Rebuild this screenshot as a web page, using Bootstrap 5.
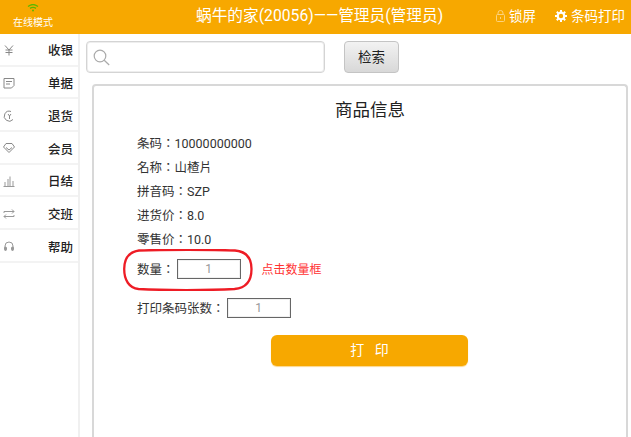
<!DOCTYPE html>
<html lang="zh">
<head>
<meta charset="utf-8">
<title>商品信息</title>
<link href="https://cdn.jsdelivr.net/npm/bootstrap@5.3.0/dist/css/bootstrap.min.css" rel="stylesheet">
<style>
html,body{height:437px;overflow:hidden;background:#fff}
body{font-family:Roboto,"Noto Sans CJK SC",sans-serif;color:#333;font-size:13px}
.top-bar{height:34px;background:#f7a800;color:#fff;position:relative}
.mode-box{width:66px;font-size:10px;line-height:12px;padding-top:4px}
.mode-box svg{display:block;margin:0 auto 5px}
.top-title{font-size:15.7px;line-height:32px;left:196px;position:absolute;top:0;white-space:nowrap}
.top-act{position:absolute;top:0;right:6px;height:32px;font-size:13.5px;gap:19px}
.side-col{width:80px;height:403px;border-right:2px solid #f0f0f0;flex:none}
.side-row{height:32.7px;border-bottom:2px solid #f3f3f3;padding:5px 5px 0 3px;font-size:12.5px;color:#222;font-weight:500}
.side-row svg{margin-top:-3px}
.main-col{padding:7px 3px 0 6px;min-width:0}
.find-box{width:239px;height:32px;border:1px solid #d4d4d4;border-radius:4px;box-shadow:inset 0 0 0 1px #eee;padding-left:6px}
.find-btn{width:55px;height:32px;margin-left:19px;padding:0;border:1px solid #c4c4c4;border-radius:4px;background:linear-gradient(#f2f2f2,#d8d8d8);font-size:13.5px;color:#222;--bs-btn-hover-bg:#ddd}
.goods-card{margin:11px 0 0 6px;height:360px;border:2px solid #d8d8d8;border-bottom:0;border-radius:4px 4px 0 0;position:relative;padding:0 42px 0 43px}
.goods-title{font-size:17.500px;line-height:24px;color:#222;margin:12px 0 9px 198px;font-weight:400}
.info-line{height:24px;line-height:24px;font-size:12.5px;color:#333;font-family:"Noto Sans CJK TC",sans-serif}
.info-line .digits,.num-box{font-family:Roboto,sans-serif}
.qty-line{margin-top:5px;height:26px;font-size:12.5px;font-family:"Noto Sans CJK TC",sans-serif}
.qty-line.second{margin-top:13px}
.num-box{width:64px;height:20px;margin-left:2px;border:1px solid #666;box-shadow:inset 0 0 0 1px #f0f0f0;color:#999;font-size:12px;line-height:18px;text-align:center}
.hint-red{color:#f33;font-size:12px;margin-left:21px;font-family:"Noto Sans CJK SC",sans-serif}
.print-btn{display:block;width:197px;height:31px;margin:14px 0 0 134px;padding:0;border:0;border-radius:6px;background:#f7a800;box-shadow:0 1px 1px #fbd68a;color:#fff;font-size:14px;--bs-btn-hover-bg:#f7a800;--bs-btn-hover-color:#fff}
.red-ring{position:absolute;left:29px;top:163px}
</style>
</head>
<body>
<header class="top-bar d-flex">
  <div class="mode-box text-center">
    <svg width="12" height="8" viewBox="0 0 12 8" fill="none" stroke="#5cb800" stroke-width="1.3"><path d="M1 2.4C4 .2 8 .2 11 2.4M3 4.4C5 3 7 3 9 4.4"/><circle cx="6" cy="6.4" r="1" fill="#5cb800" stroke="none"/></svg>
    在线模式
  </div>
  <div class="top-title">蜗牛的家(20056)——管理员(管理员)</div>
  <div class="top-act d-flex align-items-center">
    <span class="d-flex align-items-center gap-1">
      <svg width="9" height="12" viewBox="0 0 9 12" fill="none" stroke="#fcd27f"><rect x=".5" y="4.5" width="8" height="7" rx="1"/><path d="M2 4.5V3a2.5 2.5 0 0 1 5 0v1.500M4.500 7v2"/></svg>锁屏
    </span>
    <span class="d-flex align-items-center gap-1">
      <svg width="12" height="12" viewBox="0 0 12 12"><circle cx="6" cy="6" r="3.300" fill="none" stroke="#fff" stroke-width="2.200"/><path d="M6 0v2.500M6 9.500V12M0 6h2.500M9.500 6H12M1.800 1.800l1.800 1.800M8.400 8.400l1.800 1.800M10.200 1.800 8.400 3.600M3.600 8.400l-1.800 1.800" stroke="#fff" stroke-width="2"/></svg>条码打印
    </span>
  </div>
</header>
<div class="d-flex">
  <nav class="side-col">
    <div class="side-row d-flex align-items-center justify-content-between"><svg width="12" height="12" viewBox="0 0 12 12" fill="none" stroke="#888"><path d="M2 1.500 6 6l4-4.500M6 6v5.500M2.500 6h7M2.500 8.500h7"/></svg>收银</div>
    <div class="side-row d-flex align-items-center justify-content-between"><svg width="12" height="12" viewBox="0 0 12 12" fill="none" stroke="#888"><path d="M1 1.500h10v7l-2.500 2.500H1zM3 4.500h6M3 7h4"/></svg>单据</div>
    <div class="side-row d-flex align-items-center justify-content-between"><svg width="12" height="12" viewBox="0 0 12 12" fill="none" stroke="#888"><path d="M10 9.500A5 5 0 1 1 8 1.500M5 4l1.500 2L8 4M6.500 6v3"/></svg>退货</div>
    <div class="side-row d-flex align-items-center justify-content-between"><svg width="12" height="12" viewBox="0 0 12 12" fill="none" stroke="#888"><path d="M3 1.500h6l2.500 3.500L6 10.500.5 5zM3 5.500 6 8l3-2.500"/></svg>会员</div>
    <div class="side-row d-flex align-items-center justify-content-between"><svg width="12" height="12" viewBox="0 0 12 12" fill="none" stroke="#999"><path d="M2 11V7M5 11V4M7 11V1.500M10 11V6M.5 11.500h11"/></svg>日结</div>
    <div class="side-row d-flex align-items-center justify-content-between"><svg width="12" height="12" viewBox="0 0 12 12" fill="none" stroke="#999"><path d="M1 5V3.500h10M9 1.500l2 2-2 2M11 7v1.500H1M3 6.500l-2 2 2 2"/></svg>交班</div>
    <div class="side-row d-flex align-items-center justify-content-between"><svg width="12" height="12" viewBox="0 0 12 12" fill="none" stroke="#999"><path d="M2 8V6a4 4 0 0 1 8 0v2"/><rect x="1.500" y="7" width="2" height="3.500" rx="1" fill="#999"/><rect x="8.500" y="7" width="2" height="3.500" rx="1" fill="#999"/></svg>帮助</div>
  </nav>
  <main class="main-col flex-grow-1">
    <div class="d-flex">
      <div class="find-box d-flex align-items-center">
        <svg width="17" height="17" viewBox="0 0 17 17" fill="none" stroke="#aaa" stroke-width="1.200"><circle cx="7" cy="7" r="5.800"/><path d="m11.200 11.200 5 4.800"/></svg>
      </div>
      <button type="button" class="btn find-btn">检索</button>
    </div>
    <section class="goods-card">
      <h1 class="goods-title">商品信息</h1>
      <div class="info-line" lang="zh-TW">条码：<span class="digits">10000000000</span></div>
      <div class="info-line" lang="zh-TW">名称：山楂片</div>
      <div class="info-line" lang="zh-TW">拼音码：<span class="digits">SZP</span></div>
      <div class="info-line" lang="zh-TW">进货价：<span class="digits">8.0</span></div>
      <div class="info-line" lang="zh-TW">零售价：<span class="digits">10.0</span></div>
      <div class="qty-line d-flex align-items-center" lang="zh-TW">数量：<div class="num-box">1</div><span class="hint-red" lang="zh-CN">点击数量框</span></div>
      <div class="qty-line second d-flex align-items-center" lang="zh-TW">打印条码张数：<div class="num-box">1</div></div>
      <button type="button" class="btn print-btn">打&nbsp;&nbsp;&nbsp;印</button>
      <svg class="red-ring" width="130" height="42" viewBox="0 0 130 42" fill="none" stroke="#ee1c25" stroke-width="2.300"><path d="M16 1.500C40 .5 90 .5 112 1.500 124 2.500 128.500 9 128.500 20c0 11-5 19-17 20-25 1.500-72 1.500-96 0C6 39 1.200 31 1.200 20 1.200 9 6 3 16 1.500z"/></svg>
    </section>
  </main>
</div>
</body>
</html>
